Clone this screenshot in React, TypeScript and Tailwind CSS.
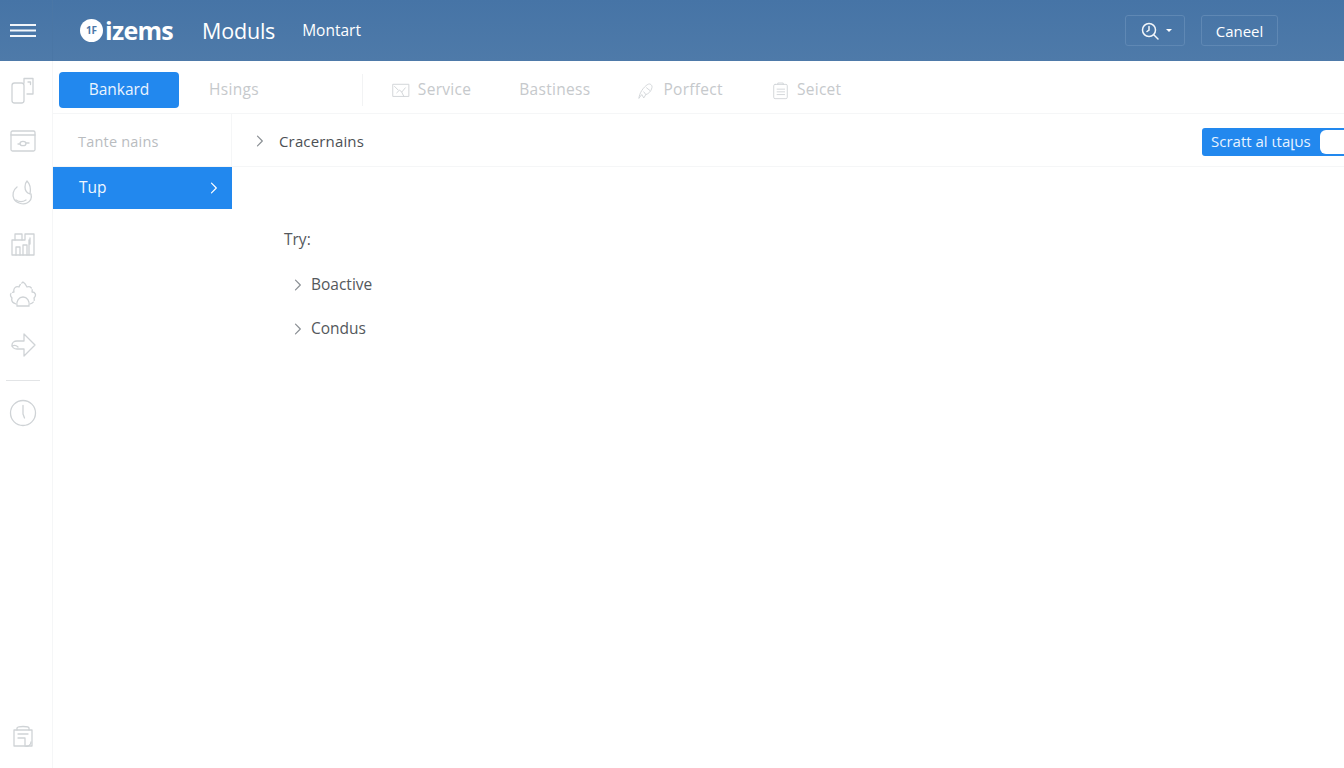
import React from "react";

const S = ({ children, size = 28, stroke = "#cfd3d6", w = 1.3 }: { children: React.ReactNode; size?: number; stroke?: string; w?: number }) => (
  <svg width={size} height={size} viewBox="0 0 28 28" fill="none" stroke={stroke} strokeWidth={w} strokeLinecap="round" strokeLinejoin="round">
    {children}
  </svg>
);

const Chevron = ({ color = "#8a8f94", size = 12, w = 1.2 }: { color?: string; size?: number; w?: number }) => (
  <svg width={size} height={size} viewBox="0 0 12 12" fill="none" stroke={color} strokeWidth={w} strokeLinecap="round" strokeLinejoin="round">
    <path d="M3.5 1.2 8.3 6 3.5 10.8" />
  </svg>
);

const railIcons: React.ReactNode[] = [
  <S key="a"><path d="M15 7V2.500h9v15.500h-6" /><rect x="3" y="7" width="12" height="20" rx="2.500" /><path d="M19 6h2.500v2.500" /></S>,
  <S key="b"><rect x="2" y="4" width="24" height="20" rx="1.500" /><path d="M2 8h24" /><ellipse cx="14" cy="16.500" rx="3" ry="2.200" /><path d="M9 17h2M17 16h3" /></S>,
  <S key="c"><path d="M8 9c-4 3-5 8-3 12 2 4 9 6 13 4 4-2 5-5 4-9" /><path d="M18 3c3 3 4 8 3 13-3-1-5-4-5-7 0-3 1-5 2-6Z" /><path d="M7 22c3 2 7 2 10 0" /></S>,
  <S key="d"><path d="M3 11v15h22V5h-9v6H3Z" /><path d="M6 11V5h7v6" /><path d="M7 26v-8h4v8M14 26v-10h4v10M20 11v15M21 9v6" /></S>,
  <S key="e"><path d="M7 24c-3-1-5-3-4-6-3-3-1-6 2-6-1-4 2-6 5-5 1-3 3-4 4-5 2 1 3 3 4 5 3-1 6 1 5 5 3 0 5 3 2 6 1 3-1 5-4 6" strokeDasharray="13 2" /><path d="M8 26c-1-5 2-9 6-9s7 4 6 9H8Z" /></S>,
  <S key="f"><path d="M15 3 26 14 15 25v-7H8c-3 0-5-2-5-4s2-4 5-4h7V3Z" /><path d="M3 15c2-1 4-1 6 1" /></S>,
];

const Tab = ({ icon, label, className }: { icon?: React.ReactNode; label: string; className?: string }) => (
  <div className={`flex items-center gap-[7px] text-[15.500px] tracking-[0.3px] text-[#c6c9cc] ${className ?? ""}`}>
    {icon}
    <span>{label}</span>
  </div>
);

export default function App() {
  return (
    <div className="flex h-[768px] w-[1344px] flex-col overflow-hidden bg-white font-['Open_Sans','Noto_Sans',sans-serif]">
      <header className="flex h-[61px] shrink-0 items-center bg-gradient-to-b from-[#4674a6] to-[#4e7aa9] text-white">
        <div className="flex h-full w-[53px] shrink-0 items-center justify-center border-r border-[#4a76a5] pr-[6px]">
          <svg width="26" height="15" viewBox="0 0 26 15" fill="none" stroke="#f2f6fa" strokeWidth="2.200">
            <path d="M0 2h26M0 7.500h26M0 13h26" />
          </svg>
        </div>
        <div className="ml-[27px] flex items-center">
          <div className="flex h-[23px] w-[23px] items-center justify-center rounded-full bg-white text-[10px] font-bold text-[#4a77a8]">
            1F
          </div>
          <span className="ml-[2px] text-[25px] leading-none font-bold tracking-[-0.7px]">izems</span>
        </div>
        <span className="ml-[29px] text-[21.500px] leading-none tracking-[-0.2px]">Moduls</span>
        <span className="ml-[27px] text-[15.500px] leading-none">Montart</span>
        <div className="ml-auto mr-[66px] flex items-center gap-4">
          <div className="flex h-[31px] w-[60px] items-center justify-center gap-[6px] rounded-[3px] border border-[#5f88b4] pl-[2px]">
            <svg width="20" height="20" viewBox="0 0 20 20" fill="none" stroke="#f2f6fa" strokeWidth="1.500" strokeLinecap="round">
              <circle cx="9" cy="9" r="6.500" />
              <path d="M14 14l4 4M9 5.500V9l-2 1.500" />
            </svg>
            <span className="h-0 w-0 border-x-[3px] border-t-[3px] border-x-transparent border-t-white" />
          </div>
          <div className="flex h-[31px] w-[77px] items-center justify-center rounded-[3px] border border-[#5f88b4] pt-[1px] text-[15px]">
            Caneel
          </div>
        </div>
      </header>

      <div className="flex min-h-0 flex-1">
        <aside className="flex w-[53px] shrink-0 flex-col items-center border-r border-[#f5f6f7] pr-[6px]">
          <div className="mt-[3px] flex flex-col">
            {railIcons.map((icon, i) => (
              <div key={i} className="flex h-[51px] items-center justify-center">
                {icon}
              </div>
            ))}
          </div>
          <div className="mt-[10px] h-px w-[34px] bg-[#e2e4e6]" />
          <div className="mt-[18px]">
            <S><circle cx="14" cy="14" r="12.500" /><path d="M14 6.500V15l1.500 4" /></S>
          </div>
          <div className="mt-auto mb-[18px]">
            <S><path d="M5 8h18v16H5Z" /><path d="M8 8V6c0-2 12-2 12 0v2" /><path d="M9 12h10M9 16h7v7" /><path d="M16 24c3 1 6-1 6-4" /></S>
          </div>
        </aside>

        <main className="flex min-w-0 flex-1 flex-col">
          <nav className="flex h-[53px] shrink-0 items-center border-b border-[#f5f6f7] pt-[6px] pl-[6px]">
            <div className="flex h-[36px] w-[120px] items-center justify-center rounded-[4px] bg-[#2288ee] text-[15.500px] text-[#eaf4ff]">
              Bankard
            </div>
            <Tab label="Hsings" className="ml-[30px]" />
            <div className="ml-[103px] h-[32px] w-px bg-[#f2f3f4]" />
            <Tab
              className="ml-[28px]"
              label="Service"
              icon={<S size={20}><path d="M3 6h22v17H3Z" /><path d="M8 18l4-4 3 3 5-6M5 9l5 5M18 23l-3-6" /></S>}
            />
            <Tab label="Bastiness" className="ml-[48px]" />
            <Tab
              className="ml-[47px]"
              label="Porffect"
              icon={<S size={19}><path d="M3 25c0-6 6-16 13-20 3-2 7 1 6 5-1 5-5 9-9 10l-3 5-3-5-4 5Z" /><path d="M14 10l5 4M10 16l3 4" /></S>}
            />
            <Tab
              className="ml-[48px]"
              label="Seicet"
              icon={<S size={19}><rect x="4" y="5" width="20" height="21" rx="2" /><path d="M10 5V3h8v2M9 12h11M9 16h11M9 20h11" /></S>}
            />
          </nav>

          <div className="flex min-h-0 flex-1">
            <div className="w-[179px] shrink-0">
              <div className="flex h-[53px] items-center border-r border-b border-[#f5f6f7] pt-[3px] pl-[25px] text-[14.500px] tracking-[0.2px] text-[#b9bcbf]">
                Tante nains
              </div>
              <div className="flex h-[42px] items-center justify-between bg-[#2288ee] pr-[12px] pl-[26px] text-[15.500px] text-[#f0f7ff]">
                <span>Tup</span>
                <Chevron color="#ffffff" />
              </div>
            </div>

            <div className="min-w-0 flex-1">
              <div className="flex h-[53px] items-center border-b border-[#f5f6f7] pt-[2px] pl-[22px]">
                <Chevron />
                <span className="ml-[13px] text-[15px] tracking-[0.15px] text-[#4c5054]">Cracernains</span>
                <div className="mt-[1px] ml-auto flex h-[28px] w-[142px] items-center justify-between overflow-hidden rounded-l-[3px] bg-[#2288ee] pl-[9px] text-[15px] text-[#e8f3ff]">
                  <span>Scratt al ιtaլυs</span>
                  <span className="h-[24px] w-[24px] rounded-l-[6px] bg-white" />
                </div>
              </div>

              <div className="pt-[61px] pl-[52px] text-[15.500px] text-[#54585c]">
                <div className="leading-[22px]">Try:</div>
                <div className="mt-[24px] flex h-[22px] items-center pl-[8px]">
                  <Chevron />
                  <span className="ml-[7px]">Boactive</span>
                </div>
                <div className="mt-[22px] flex h-[22px] items-center pl-[8px]">
                  <Chevron />
                  <span className="ml-[7px]">Condus</span>
                </div>
              </div>
            </div>
          </div>
        </main>
      </div>
    </div>
  );
}
